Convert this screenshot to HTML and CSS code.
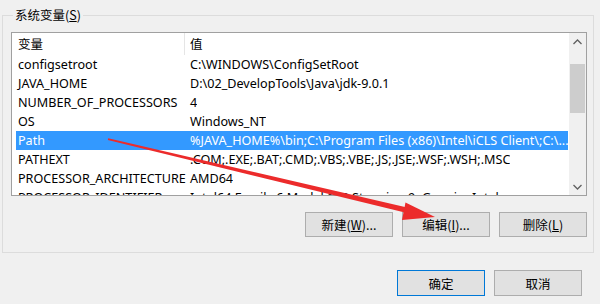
FILE: index.html
```html
<!DOCTYPE html>
<html lang="zh-CN">
<head>
  <meta charset="UTF-8">
  <title>环境变量</title>
  <link rel="stylesheet" href="styles.css">
</head>
<body>
  <div class="dialog">
    <fieldset class="group">
      <legend>系统变量(<u>S</u>)</legend>

      <div class="listbox">
        <div class="list">
          <div class="row head">
            <span class="name">变量</span>
            <span class="value">值</span>
          </div>
          <div class="row"><span class="name">configsetroot</span><span class="value">C:\WINDOWS\ConfigSetRoot</span></div>
          <div class="row"><span class="name">JAVA_HOME</span><span class="value">D:\02_DevelopTools\Java\jdk-9.0.1</span></div>
          <div class="row"><span class="name">NUMBER_OF_PROCESSORS</span><span class="value">4</span></div>
          <div class="row"><span class="name">OS</span><span class="value">Windows_NT</span></div>
          <div class="row selected"><span class="name">Path</span><span class="value">%JAVA_HOME%\bin;C:\Program Files (x86)\Intel\iCLS Client\;C:\...</span></div>
          <div class="row"><span class="name">PATHEXT</span><span class="value">.COM;.EXE;.BAT;.CMD;.VBS;.VBE;.JS;.JSE;.WSF;.WSH;.MSC</span></div>
          <div class="row"><span class="name">PROCESSOR_ARCHITECTURE</span><span class="value">AMD64</span></div>
          <div class="row"><span class="name">PROCESSOR_IDENTIFIER</span><span class="value">Intel64 Family 6 Model 142 Stepping 9, GenuineIntel</span></div>
        </div>

        <div class="scrollbar">
          <div class="arrow-btn">
            <svg width="9" height="6" viewBox="0 0 9 6"><path d="M0.5 5 L4.5 1 L8.5 5" fill="none" stroke="#606060" stroke-width="1.3"/></svg>
          </div>
          <div class="track">
            <div class="thumb"></div>
          </div>
          <div class="arrow-btn">
            <svg width="9" height="6" viewBox="0 0 9 6"><path d="M0.5 1 L4.5 5 L8.5 1" fill="none" stroke="#606060" stroke-width="1.3"/></svg>
          </div>
        </div>
      </div>

      <div class="actions">
        <button>新建(<u>W</u>)...</button>
        <button>编辑(<u>I</u>)...</button>
        <button>删除(<u>L</u>)</button>
      </div>
    </fieldset>

    <div class="footer">
      <button class="primary">确定</button>
      <button>取消</button>
    </div>
  </div>

  <!-- 红色标注箭头 -->
  <svg class="mark" width="600" height="304" viewBox="0 0 600 304">
    <polygon points="108.2,138.3 107.8,140.0 410.0,213.8 411.4,208.4" fill="#ec2b2b"/>
    <polygon points="435,217 405.5,202.5 402,220.0" fill="#ec2b2b"/>
  </svg>
</body>
</html>
```

FILE: styles.css
```css
body {
  margin: 0;
  background: #f0f0f0;
  font-family: "Noto Sans", "Noto Sans CJK SC", sans-serif;
  font-size: 12.6px;
  color: #000;
  width: 600px;
  height: 304px;
  overflow: hidden;
}

.dialog {
  display: flex;
  flex-direction: column;
}

.group {
  margin: 6px 6px 0 2px;
  padding: 8px 6px 15px 8px;
  border: 1px solid #dcdcdc;
  min-width: 0;
}

.group legend {
  padding: 0 2px;
  margin-left: 2px;
  line-height: 18px;
  font-family: "Noto Sans CJK SC", sans-serif;
  font-size: 12.5px;
}

.listbox {
  display: flex;
  height: 162px;
  border: 1px solid #a0a0a0;
  background: #fff;
  overflow: hidden;
}

.list {
  flex: 1;
  padding-left: 4px;
  overflow: hidden;
}

.row {
  display: flex;
  height: 19px;
  line-height: 19px;
  white-space: nowrap;
}

.row.head {
  height: 22px;
  line-height: 22px;
  font-family: "Noto Sans CJK SC", sans-serif;
  font-size: 12.5px;
}

.row.head .value {
  border-left: 1px solid #e5e5e5;
  padding-left: 5px;
}

.name {
  width: 166px;
  padding-left: 2px;
  flex-shrink: 0;
}

.value {
  padding-left: 6px;
  overflow: hidden;
}

.row.selected {
  background: #3399ff;
  color: #fff;
  margin-right: 1px;
}

.scrollbar {
  width: 17px;
  display: flex;
  flex-direction: column;
  background: #f0f0f0;
}

.arrow-btn {
  height: 17px;
  display: flex;
  align-items: center;
  justify-content: center;
}

.track {
  flex: 1;
  padding-top: 14px;
}

.thumb {
  height: 49px;
  margin: 0 1px;
  background: #cdcdcd;
}

.actions {
  display: flex;
  justify-content: flex-end;
  gap: 9px;
  margin-top: 16px;
}

button {
  width: 88px;
  height: 25px;
  padding: 0;
  background: #e1e1e1;
  border: 1px solid #adadad;
  font-family: "Noto Sans CJK SC", sans-serif;
  font-size: 12.5px;
  color: #000;
}

.footer {
  display: flex;
  justify-content: flex-end;
  gap: 9px;
  padding: 17px 18px 0 0;
}

.footer button {
  height: 26px;
}

.footer .primary {
  border-color: #0078d7;
}

.mark {
  position: absolute;
  left: 0;
  top: 0;
  pointer-events: none;
}
```
